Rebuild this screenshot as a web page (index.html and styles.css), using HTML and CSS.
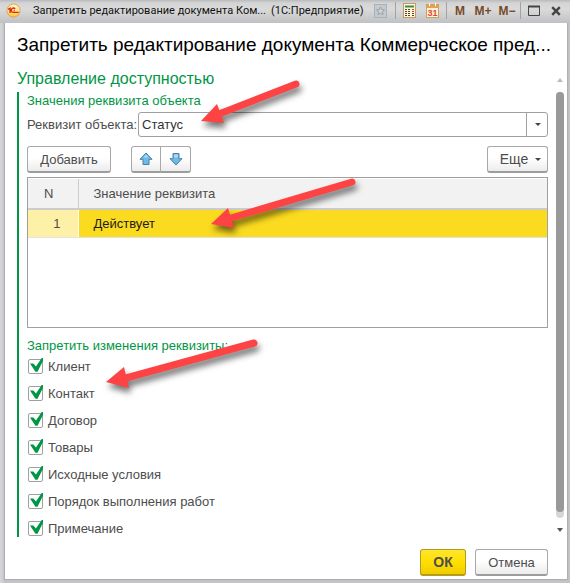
FILE: index.html
```html
<!DOCTYPE html>
<html lang="ru">
<head>
<meta charset="utf-8">
<title>Запретить редактирование документа</title>
<link rel="stylesheet" href="styles.css">
</head>
<body>
<div class="window">
  <header class="titlebar">
    <svg class="logo" viewBox="0 0 16 16" aria-hidden="true">
      <defs><linearGradient id="logo-fill" x1="0" y1="0" x2="0" y2="1"><stop offset="0" stop-color="#fff6cf"/><stop offset=".55" stop-color="#ffe884"/><stop offset="1" stop-color="#f9c52c"/></linearGradient></defs>
      <circle cx="8" cy="8" r="7" fill="url(#logo-fill)" stroke="#e89a5a"/>
      <path d="M2.300 6.800 4.300 5.500V10.600M9.700 6.400A2.300 2.300 0 1 0 8.200 10H13.600M9.300 8.100H8.200" fill="none" stroke="#e0201b" stroke-width="1.400"/>
    </svg>
    <span class="caption">Запретить редактирование документа Ком...</span>
    <span class="caption app">(1С:Предприятие)</span>
    <div class="tools">
      <button class="tool star" aria-label="В избранное" disabled>
        <svg width="14" height="14" viewBox="0 0 14 14"><rect x=".5" y=".5" width="12" height="13" fill="#c3cad0" stroke="#a5b1bb"/><path d="m6.500 3 1.200 2.600 2.800.3-2.100 1.900.6 2.800-2.500-1.400L4 10.600l.6-2.800L2.500 5.900l2.800-.3z" fill="#d3d3cf" stroke="#98a1a8"/></svg>
      </button>
      <i class="sep"></i>
      <button class="tool calc" aria-label="Калькулятор">
        <svg width="13" height="15" viewBox="0 0 13 15"><rect x=".5" y=".5" width="12" height="14" fill="#fff6da" stroke="#c39a62"/><path d="M2 3.500h9" stroke="#3f8b45" stroke-width="2"/><path d="M2 6.500h6M2 8.500h6M2 10.500h6M2 12.500h6" stroke="#51432f" stroke-dasharray="2 1"/><path d="M9 6.500h2M9 8.500h2" stroke="#d93b2b"/><path d="M9 10.500h2M9 12.500h2" stroke="#51432f"/></svg>
      </button>
      <button class="tool cal" aria-label="Календарь">
        <svg width="13" height="15" viewBox="0 0 13 15"><rect x=".5" y="1.500" width="12" height="13" fill="#fff4d8" stroke="#c9a06b"/><path d="M1 2h11v3H1z" fill="#e9a052"/><path d="M3.500 0v3M9.500 0v3" stroke="#fff"/><text x="6.500" y="13" class="day">31</text></svg>
      </button>
      <i class="sep"></i>
      <button class="tool mem">M</button>
      <button class="tool mem plus">M+</button>
      <button class="tool mem minus">M−</button>
      <i class="sep"></i>
      <button class="tool max" aria-label="Развернуть"><svg width="12" height="11" viewBox="0 0 12 11"><path d="M.5 1.500h11v9H.5z" fill="none" stroke="#444"/><path d="M0 1.500h12" stroke="#444" stroke-width="2"/></svg></button>
      <button class="tool close" aria-label="Закрыть"><svg width="10" height="10" viewBox="0 0 10 10"><path d="m1.200 1.200 7.600 7.600m0-7.600L1.200 8.800" stroke="#444" stroke-width="2.400"/></svg></button>
    </div>
  </header>

  <main class="client">
    <h1>Запретить редактирование документа Коммерческое пред...</h1>
    <div class="scroller">
      <div class="panel">
        <h2>Управление доступностью</h2>
        <section class="group">
          <h3>Значения реквизита объекта</h3>
          <div class="field">
            <label for="attr">Реквизит объекта:</label>
            <div class="combo"><select id="attr"><option>Статус</option></select></div>
          </div>
          <div class="commands">
            <button class="btn add">Добавить</button>
            <div class="pair">
              <button class="btn" aria-label="Вверх"><svg width="14" height="14" viewBox="0 0 14 14"><path d="M7 1 13 7.300H10V12.500H4V7.300H1z" fill="#6db9e8" stroke="#4a7f9f"/><path d="M7 2.500 4.500 5.500H9.500z" fill="#a9dbf6"/></svg></button>
              <button class="btn" aria-label="Вниз"><svg width="14" height="14" viewBox="0 0 14 14"><path d="M7 13 13 6.700H10V1.500H4V6.700H1z" fill="#6db9e8" stroke="#4a7f9f"/><path d="M5 2.500h4v3H5z" fill="#a9dbf6"/></svg></button>
            </div>
            <button class="btn more">Еще<i class="caret"></i></button>
          </div>
          <div class="grid">
            <table>
              <thead><tr><th class="num">N</th><th>Значение реквизита</th></tr></thead>
              <tbody><tr><td class="num">1</td><td>Действует</td></tr></tbody>
            </table>
          </div>
          <h3 class="second">Запретить изменения реквизиты:</h3>
          <div class="checks">
            <label><input type="checkbox" checked>Клиент</label>
            <label><input type="checkbox" checked>Контакт</label>
            <label><input type="checkbox" checked>Договор</label>
            <label><input type="checkbox" checked>Товары</label>
            <label><input type="checkbox" checked>Исходные условия</label>
            <label><input type="checkbox" checked>Порядок выполнения работ</label>
            <label><input type="checkbox" checked>Примечание</label>
          </div>
        </section>
      </div>
      <div class="scrollbar" aria-hidden="true"><i class="up"></i><div class="track"><div class="thumb"></div></div><i class="down"></i></div>
    </div>
    <footer>
      <button class="btn ok">ОК</button>
      <button class="btn cancel">Отмена</button>
    </footer>
  </main>

  <svg class="arrows" width="570" height="583" viewBox="0 0 570 583" aria-hidden="true">
    <g fill="#fd4343" stroke="#fd4343">
      <path d="M296 84 219 114" stroke-width="7" stroke-linecap="round"/>
      <path d="M201 121 217 104 224 123z" stroke="none"/>
      <path d="M352 182 231 218" stroke-width="7" stroke-linecap="round"/>
      <path d="M211 224 228 208 234 228z" stroke="none"/>
      <path d="M254 343 126 378" stroke-width="7" stroke-linecap="round"/>
      <path d="M106 382 124 367 129 388z" stroke="none"/>
    </g>
  </svg>
</div>
</body>
</html>
```
FILE: styles.css
```css
* { box-sizing: border-box; }
body { margin: 0; background: #c9cbcd; }
body, button, select { font-family: "Liberation Sans", Arial, sans-serif; font-size: 13px; color: #4d4d4d; }
h1, h2, h3 { margin: 0; font-weight: 400; }
button { padding: 0; }

.window {
  position: relative;
  min-height: 100vh;
  padding: 0 3px 4px 5px;
  display: flex;
  flex-direction: column;
  overflow: hidden;
  background: linear-gradient(90deg, #d6d8da, #c2c4c7 5px, #c2c4c7);
}

.titlebar {
  height: 23px;
  margin: 0 -3px 0 -5px;
  padding: 0 8px 2px 6px;
  display: flex;
  align-items: center;
  background: linear-gradient(#b9babb, #d4d4d5 3px, #dadada 9px, #c0c1c3);
  white-space: nowrap;
}
.logo { width: 15px; height: 15px; margin-right: 12px; flex: none; }
.caption { font: 11px Roboto, sans-serif; color: #111; }
.app { margin-left: 5px; }
.tools { margin-left: auto; display: flex; align-items: center; }
.tool { border: 0; background: none; display: flex; justify-content: center; align-items: center; height: 18px; }
.sep { width: 1px; height: 17px; background: #a2a3a5; }
.star { width: 14px; margin-right: 7px; }
.calc { width: 14px; margin-left: 6px; }
.cal { width: 14px; margin: 0 7px 0 9px; }
.day { font: 700 9px "Liberation Sans", sans-serif; fill: #e1452e; text-anchor: middle; }
.mem { font-weight: 700; font-size: 12px; color: #754a2a; width: 12px; margin-left: 7px; }
.plus { width: 18px; margin-left: 8px; }
.minus { width: 18px; margin: 0 4px 0 6px; }
.max { width: 12px; margin-left: 7px; }
.close { width: 12px; margin-left: 10px; }

.client {
  flex: 1;
  display: flex;
  flex-direction: column;
  background: #fff;
  box-shadow: 0 0 1px 1px #adafb2;
  clip-path: inset(0 -3px -4px -3px);
}
h1 { padding: 11px 12px 0; font-size: 19px; line-height: 22px; color: #000; white-space: nowrap; }
.scroller { flex: 1; display: flex; margin-top: 13px; }
.panel { flex: 1; padding-left: 12px; }
h2 { font-size: 16px; line-height: 20px; color: #009646; margin-bottom: 3px; }
.group { border-left: 2px solid #009646; padding-left: 8px; }
h3 { font-size: 13px; line-height: 18px; color: #009646; }

.field { display: flex; align-items: center; margin-top: 2px; }
.field label { width: 111px; white-space: nowrap; }
.combo { flex: 1; position: relative; }
.combo::before { content: ""; position: absolute; right: 21px; top: 0; bottom: 0; width: 1px; background: #a0a0a0; }
.combo::after { content: ""; position: absolute; right: 7px; top: 11px; border: 3px solid transparent; border-top-color: #444; border-bottom: 0; }
select { display: block; appearance: none; width: 100%; height: 25px; border: 1px solid #a0a0a0; border-radius: 3px; background: #fff; padding: 0 24px 0 3px; color: #333; }

.commands { display: flex; margin: 9px 0 4px; }
.btn {
  height: 27px;
  display: flex;
  align-items: center;
  justify-content: center;
  border: 1px solid #a8a8a8;
  border-bottom: 2px solid #9c9c9c;
  border-radius: 3px;
  background: linear-gradient(#fff 45%, #ececec);
}
.add { width: 84px; }
.pair { display: flex; margin-left: 20px; }
.pair .btn { width: 30px; }
.pair .btn:first-child { border-radius: 3px 0 0 3px; }
.pair .btn:last-child { border-radius: 0 3px 3px 0; margin-left: -1px; width: 31px; }
.more { width: 61px; margin-left: auto; padding-left: 6px; gap: 7px; font-size: 14px; }
.caret { border: 3px solid transparent; border-top-color: #444; border-bottom: 0; }

.grid { height: 151px; border: 1px solid #a0a0a0; padding: 1px 0; }
table { width: 100%; border-collapse: collapse; table-layout: fixed; }
th, td { padding: 0 0 0 15px; text-align: left; font-weight: 400; }
th { height: 30px; background: #f2f2f2; border-bottom: 2px solid #ccc; }
th.num { width: 50px; border-right: 1px solid #ccc; padding-left: 16px; }
td { height: 28px; background: #fbdb1f; color: #1c1c1c; border-bottom: 1px solid #e3e3e3; }
td.num { background: #fdf1a8; color: #4d4d4d; padding: 0 17px 0 0; text-align: right; border-right: 1px solid #fff; }

.second { margin-top: 9px; }
.checks label { display: flex; align-items: center; gap: 5px; height: 27px; }
.checks { margin: -2px 0 0 1px; height: 184px; }
input { appearance: none; width: 15px; height: 15px; margin: 0; border: 1px solid #a0a0a0; border-radius: 2px; position: relative; }
input:checked::before {
  content: "";
  position: absolute;
  left: 1px;
  top: -2px;
  width: 13px;
  height: 14px;
  background: #009646;
  clip-path: polygon(0 40%, 26% 40%, 46% 60%, 90% 0, 100% 0, 100% 20%, 58% 98%, 42% 98%);
}

.scrollbar { width: 8px; margin: 9px 3px 5px 8px; display: flex; flex-direction: column; align-items: center; }
.up { border: 3px solid transparent; border-bottom: 4px solid #bbb; border-top: 0; }
.down { border: 3px solid transparent; border-top: 4px solid #555; border-bottom: 0; }
.track { flex: 1; width: 8px; margin: 10px 0; border-radius: 4px; background: #d6d6d6; padding-bottom: 6px; }
.thumb { height: 100%; border-radius: 4px; background: #999; }

footer { display: flex; justify-content: flex-end; gap: 9px; padding: 12px 19px 3px 0; }
.ok { width: 46px; font-weight: 700; font-size: 14px; background: linear-gradient(#ffe62e, #ffdf00 50%, #f0cc00); border-color: #b39b1c; }
.cancel { width: 73px; }

.arrows { position: absolute; left: 0; top: 0; pointer-events: none; filter: drop-shadow(2px 5px 3px rgba(0, 0, 0, .55)); }
```
